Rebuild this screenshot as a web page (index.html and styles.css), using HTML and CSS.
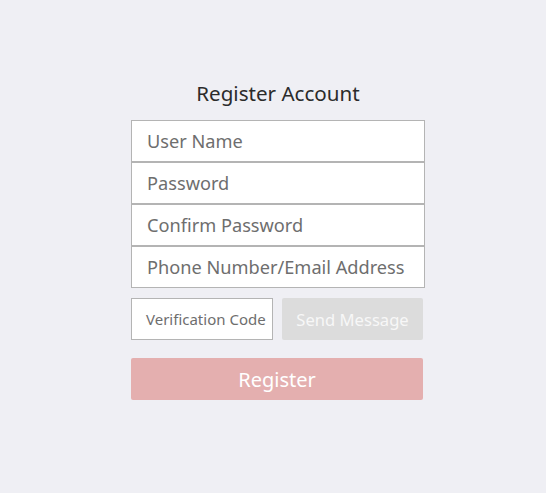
FILE: index.html
```html
<!DOCTYPE html>
<html lang="en">
<head>
<meta charset="utf-8">
<title>Register Account</title>
<link rel="stylesheet" href="styles.css">
</head>
<body>
<div class="page">
  <form class="register">
    <h1 class="title">Register Account</h1>
    <div class="fields">
      <div class="field">User Name</div>
      <div class="field">Password</div>
      <div class="field">Confirm Password</div>
      <div class="field">Phone Number/Email Address</div>
    </div>
    <div class="code-row">
      <div class="field code">Verification Code</div>
      <div class="send">Send Message</div>
    </div>
    <div class="submit">Register</div>
  </form>
</div>
</body>
</html>
```
FILE: styles.css
```css
html, body {
  margin: 0;
  padding: 0;
  background: #efeff4;
}
body {
  font-family: "Noto Sans", "Open Sans", sans-serif;
  width: 546px;
  height: 493px;
}
.page {
  display: flex;
  justify-content: center;
  padding-left: 10px;
  padding-top: 79px;
}
.register {
  width: 294px;
  display: flex;
  flex-direction: column;
}
.title {
  margin: 0 0 12px;
  font-size: 20.6px;
  font-weight: normal;
  line-height: 29px;
  text-align: center;
  color: #2b2b2b;
}
.fields {
  display: flex;
  flex-direction: column;
}
.field {
  box-sizing: border-box;
  height: 42px;
  border: 1px solid #b4b4b4;
  background: #fff;
  padding: 0 15px;
  font-size: 18.2px;
  line-height: 41px;
  color: #6e6e6e;
  white-space: nowrap;
}
.code-row {
  display: flex;
  gap: 9px;
  margin-top: 10px;
}
.field.code {
  width: 142px;
  font-size: 15px;
  padding: 0 14px;
}
.send {
  width: 141px;
  height: 42px;
  border-radius: 2px;
  background: #dcdcdc;
  color: #f7f7f7;
  font-size: 16.6px;
  line-height: 43px;
  text-align: center;
}
.submit {
  width: 292px;
  height: 42px;
  margin-top: 18px;
  border-radius: 2px;
  background: #e4afaf;
  color: #fff;
  font-size: 20px;
  line-height: 44px;
  text-align: center;
}
```
